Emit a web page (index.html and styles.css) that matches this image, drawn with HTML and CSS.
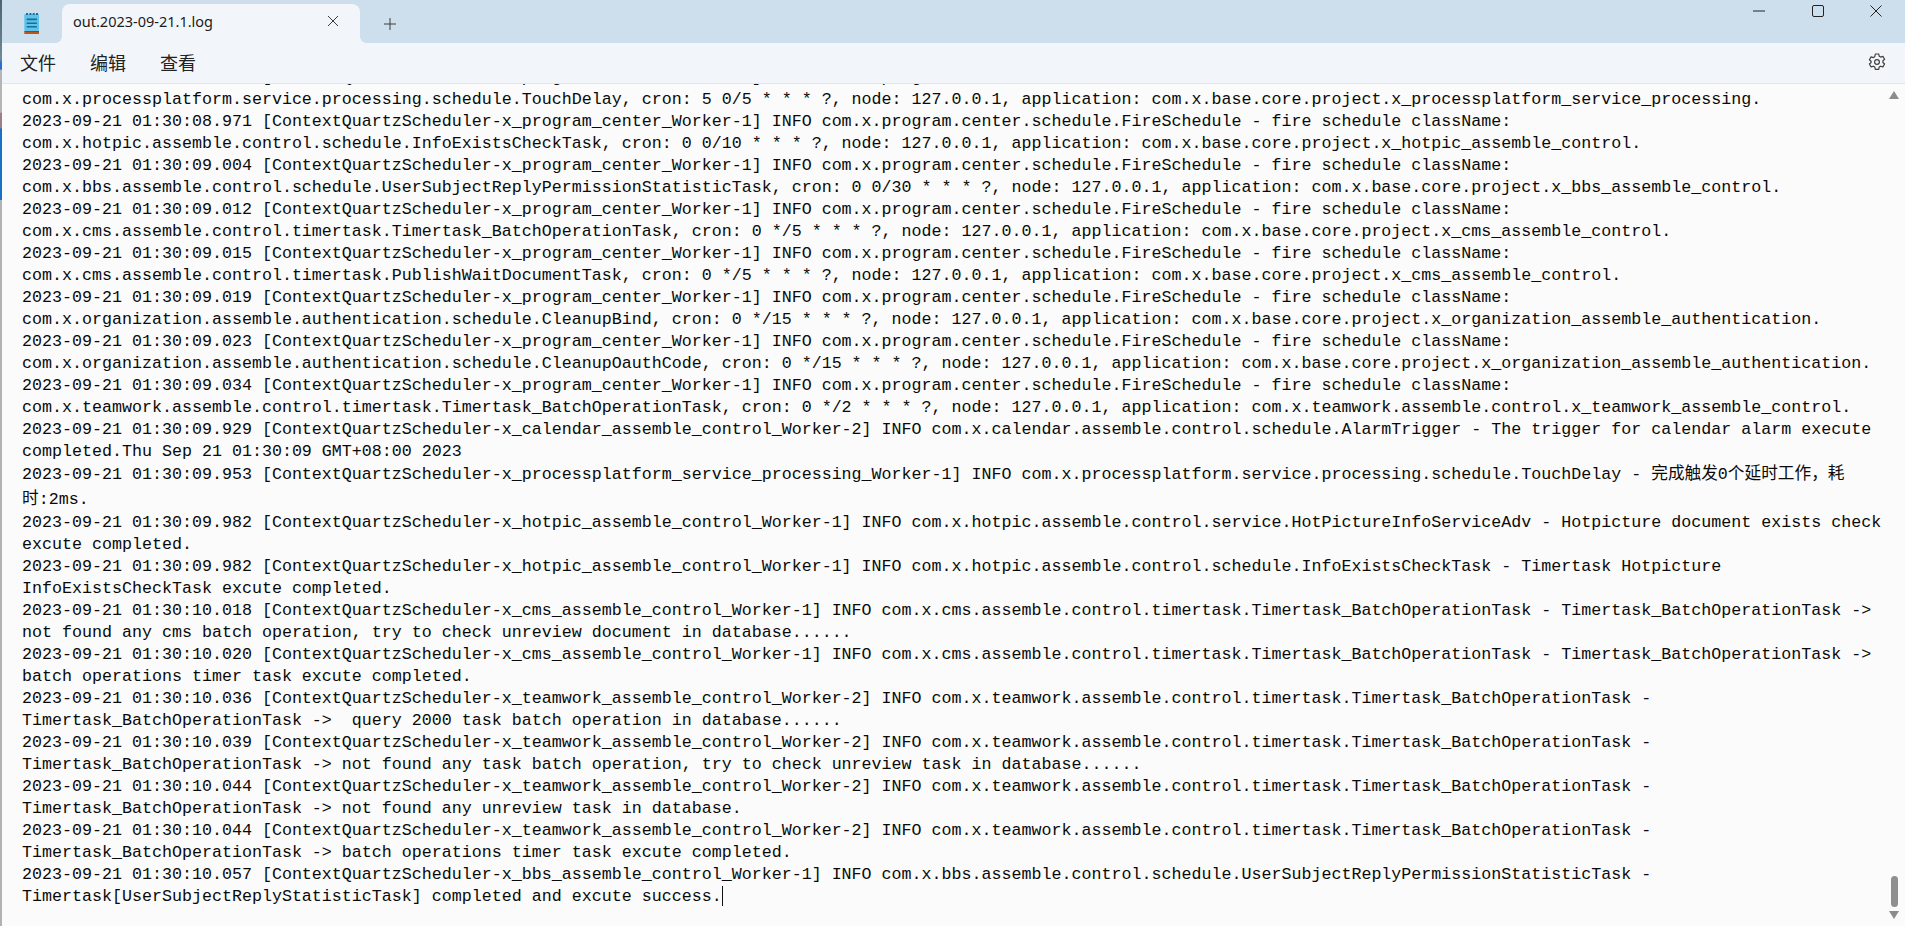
FILE: index.html
```html
<!DOCTYPE html>
<html lang="zh">
<head>
<meta charset="utf-8">
<title>out.2023-09-21.1.log</title>
<link rel="stylesheet" href="styles.css">
</head>
<body>
<div class="window">
  <header class="titlebar">
    <div class="app-icon">
      <svg width="16" height="21" viewBox="0 0 16 21"><rect x="0.3" y="1" width="14.7" height="17" rx="1" fill="#5cc3ea"/><path d="M2 0h2v2H2zM5.4 0h2v2h-2zM8.7 0h2v2h-2zM12 0h2v2h-2z" fill="#1d6f9f"/><path d="M2.7 6.4h10.2M2.7 10.2h10.2M2.7 13.8h10.2" stroke="#1a6c99" stroke-width="1.6"/><rect x="0.3" y="18" width="14.7" height="1" fill="#7d4a24"/><rect x="0.3" y="19" width="14.7" height="2" fill="#b9561a"/></svg>
    </div>
    <div class="tab">
      <span class="tab-title">out.2023-09-21.1.log</span>
      <svg class="tab-close" width="12" height="12" viewBox="0 0 12 12"><path d="M1 1l10 10M11 1L1 11" stroke="#3c3c3c" stroke-width="1"/></svg>
    </div>
    <svg class="new-tab" width="12" height="12" viewBox="0 0 12 12"><path d="M6 0v12M0 6h12" stroke="#3c3c3c" stroke-width="1"/></svg>
    <div class="window-controls">
      <svg width="12" height="12" viewBox="0 0 12 12"><path d="M0 6h12" stroke="#222" stroke-width="1"/></svg>
      <svg width="12" height="12" viewBox="0 0 12 12"><rect x="0.5" y="0.5" width="11" height="11" rx="1.5" fill="none" stroke="#222" stroke-width="1"/></svg>
      <svg width="12" height="12" viewBox="0 0 12 12"><path d="M0.5 0.5l11 11M11.5 0.5l-11 11" stroke="#222" stroke-width="1"/></svg>
    </div>
  </header>
  <nav class="toolbar">
    <span class="menu-item">文件</span>
    <span class="menu-item">编辑</span>
    <span class="menu-item">查看</span>
    <svg class="settings" width="18" height="18" viewBox="0 0 18 18"><path d="M7.3 1h3.4l.5 2.2 1.5.9 2.2-.7 1.7 2.9-1.7 1.5v1.7l1.7 1.5-1.7 2.9-2.2-.7-1.5.9-.5 2.2H7.3l-.5-2.2-1.5-.9-2.2.7-1.7-2.9 1.7-1.5V8.3L1.4 6.8l1.7-2.9 2.2.7 1.5-.9z" fill="none" stroke="#404040" stroke-width="1.2" stroke-linejoin="round"/><circle cx="9" cy="9" r="2.4" fill="none" stroke="#404040" stroke-width="1.2"/></svg>
  </nav>
  <main class="editor">
    <div class="log">
      <div class="line-clipped"><div class="line">2023-09-21 01:30:08.960 [ContextQuartzScheduler-x_program_center_Worker-1] INFO com.x.program.center.schedule.FireSchedule - fire schedule className:</div></div>
      <div class="line">com.x.processplatform.service.processing.schedule.TouchDelay, cron: 5 0/5 * * * ?, node: 127.0.0.1, application: com.x.base.core.project.x_processplatform_service_processing.</div>
      <div class="line">2023-09-21 01:30:08.971 [ContextQuartzScheduler-x_program_center_Worker-1] INFO com.x.program.center.schedule.FireSchedule - fire schedule className:</div>
      <div class="line">com.x.hotpic.assemble.control.schedule.InfoExistsCheckTask, cron: 0 0/10 * * * ?, node: 127.0.0.1, application: com.x.base.core.project.x_hotpic_assemble_control.</div>
      <div class="line">2023-09-21 01:30:09.004 [ContextQuartzScheduler-x_program_center_Worker-1] INFO com.x.program.center.schedule.FireSchedule - fire schedule className:</div>
      <div class="line">com.x.bbs.assemble.control.schedule.UserSubjectReplyPermissionStatisticTask, cron: 0 0/30 * * * ?, node: 127.0.0.1, application: com.x.base.core.project.x_bbs_assemble_control.</div>
      <div class="line">2023-09-21 01:30:09.012 [ContextQuartzScheduler-x_program_center_Worker-1] INFO com.x.program.center.schedule.FireSchedule - fire schedule className:</div>
      <div class="line">com.x.cms.assemble.control.timertask.Timertask_BatchOperationTask, cron: 0 */5 * * * ?, node: 127.0.0.1, application: com.x.base.core.project.x_cms_assemble_control.</div>
      <div class="line">2023-09-21 01:30:09.015 [ContextQuartzScheduler-x_program_center_Worker-1] INFO com.x.program.center.schedule.FireSchedule - fire schedule className:</div>
      <div class="line">com.x.cms.assemble.control.timertask.PublishWaitDocumentTask, cron: 0 */5 * * * ?, node: 127.0.0.1, application: com.x.base.core.project.x_cms_assemble_control.</div>
      <div class="line">2023-09-21 01:30:09.019 [ContextQuartzScheduler-x_program_center_Worker-1] INFO com.x.program.center.schedule.FireSchedule - fire schedule className:</div>
      <div class="line">com.x.organization.assemble.authentication.schedule.CleanupBind, cron: 0 */15 * * * ?, node: 127.0.0.1, application: com.x.base.core.project.x_organization_assemble_authentication.</div>
      <div class="line">2023-09-21 01:30:09.023 [ContextQuartzScheduler-x_program_center_Worker-1] INFO com.x.program.center.schedule.FireSchedule - fire schedule className:</div>
      <div class="line">com.x.organization.assemble.authentication.schedule.CleanupOauthCode, cron: 0 */15 * * * ?, node: 127.0.0.1, application: com.x.base.core.project.x_organization_assemble_authentication.</div>
      <div class="line">2023-09-21 01:30:09.034 [ContextQuartzScheduler-x_program_center_Worker-1] INFO com.x.program.center.schedule.FireSchedule - fire schedule className:</div>
      <div class="line">com.x.teamwork.assemble.control.timertask.Timertask_BatchOperationTask, cron: 0 */2 * * * ?, node: 127.0.0.1, application: com.x.teamwork.assemble.control.x_teamwork_assemble_control.</div>
      <div class="line">2023-09-21 01:30:09.929 [ContextQuartzScheduler-x_calendar_assemble_control_Worker-2] INFO com.x.calendar.assemble.control.schedule.AlarmTrigger - The trigger for calendar alarm execute</div>
      <div class="line">completed.Thu Sep 21 01:30:09 GMT+08:00 2023</div>
      <div class="line line-cjk">2023-09-21 01:30:09.953 [ContextQuartzScheduler-x_processplatform_service_processing_Worker-1] INFO com.x.processplatform.service.processing.schedule.TouchDelay - 完成触发0个延时工作，耗</div>
      <div class="line line-cjk-end">时:2ms.</div>
      <div class="line">2023-09-21 01:30:09.982 [ContextQuartzScheduler-x_hotpic_assemble_control_Worker-1] INFO com.x.hotpic.assemble.control.service.HotPictureInfoServiceAdv - Hotpicture document exists check</div>
      <div class="line">excute completed.</div>
      <div class="line">2023-09-21 01:30:09.982 [ContextQuartzScheduler-x_hotpic_assemble_control_Worker-1] INFO com.x.hotpic.assemble.control.schedule.InfoExistsCheckTask - Timertask Hotpicture</div>
      <div class="line">InfoExistsCheckTask excute completed.</div>
      <div class="line">2023-09-21 01:30:10.018 [ContextQuartzScheduler-x_cms_assemble_control_Worker-1] INFO com.x.cms.assemble.control.timertask.Timertask_BatchOperationTask - Timertask_BatchOperationTask -&gt;</div>
      <div class="line">not found any cms batch operation, try to check unreview document in database......</div>
      <div class="line">2023-09-21 01:30:10.020 [ContextQuartzScheduler-x_cms_assemble_control_Worker-1] INFO com.x.cms.assemble.control.timertask.Timertask_BatchOperationTask - Timertask_BatchOperationTask -&gt;</div>
      <div class="line">batch operations timer task excute completed.</div>
      <div class="line">2023-09-21 01:30:10.036 [ContextQuartzScheduler-x_teamwork_assemble_control_Worker-2] INFO com.x.teamwork.assemble.control.timertask.Timertask_BatchOperationTask -</div>
      <div class="line">Timertask_BatchOperationTask -&gt;  query 2000 task batch operation in database......</div>
      <div class="line">2023-09-21 01:30:10.039 [ContextQuartzScheduler-x_teamwork_assemble_control_Worker-2] INFO com.x.teamwork.assemble.control.timertask.Timertask_BatchOperationTask -</div>
      <div class="line">Timertask_BatchOperationTask -&gt; not found any task batch operation, try to check unreview task in database......</div>
      <div class="line">2023-09-21 01:30:10.044 [ContextQuartzScheduler-x_teamwork_assemble_control_Worker-2] INFO com.x.teamwork.assemble.control.timertask.Timertask_BatchOperationTask -</div>
      <div class="line">Timertask_BatchOperationTask -&gt; not found any unreview task in database.</div>
      <div class="line">2023-09-21 01:30:10.044 [ContextQuartzScheduler-x_teamwork_assemble_control_Worker-2] INFO com.x.teamwork.assemble.control.timertask.Timertask_BatchOperationTask -</div>
      <div class="line">Timertask_BatchOperationTask -&gt; batch operations timer task excute completed.</div>
      <div class="line">2023-09-21 01:30:10.057 [ContextQuartzScheduler-x_bbs_assemble_control_Worker-1] INFO com.x.bbs.assemble.control.schedule.UserSubjectReplyPermissionStatisticTask -</div>
      <div class="line">Timertask[UserSubjectReplyStatisticTask] completed and excute success.<span class="caret"></span></div>
    </div>
    <div class="scrollbar">
      <span class="arrow-up"></span>
      <span class="thumb"></span>
      <span class="arrow-down"></span>
    </div>
  </main>
</div>
</body>
</html>
```
FILE: styles.css
```css
* { box-sizing: border-box; }
html, body { margin: 0; height: 100%; overflow: hidden; }
body { background: #fbfbfb; }
.window {
  height: 926px;
  display: flex;
  flex-direction: column;
  border-left: 2px solid #b0b2b4;
  border-image: linear-gradient(to bottom,
    #4d6470 0, #6d8a96 60px,
    #2a6fd0 64px, #2a6fd0 70px,
    #b5b5b5 71px, #b5b5b5 113px,
    #9a7f8a 114px, #9a7f8a 128px,
    #1a70c4 130px, #1a70c4 200px,
    #b0b2b4 201px, #b0b2b4 100%) 1;
  font-family: "Noto Sans", "Noto Sans CJK SC", sans-serif;
}
.titlebar {
  height: 43px;
  flex: none;
  display: flex;
  align-items: flex-end;
  background: #cddeed;
}
.app-icon { width: 60px; height: 39px; padding: 9px 0 0 22px; }
.tab {
  position: relative;
  width: 298px;
  height: 39px;
  display: flex;
  align-items: center;
  justify-content: space-between;
  padding: 0 21px 6px 11px;
  background: #f2f6fa;
  border-radius: 8px 8px 0 0;
  font-size: 14.5px;
  color: #1c1c1c;
}
.tab::before, .tab::after {
  content: "";
  position: absolute;
  bottom: 0;
  width: 6px;
  height: 6px;
}
.tab::before {
  left: -6px;
  background: radial-gradient(circle at 0 0, transparent 5.5px, #f2f6fa 6px);
}
.tab::after {
  right: -6px;
  background: radial-gradient(circle at 100% 0, transparent 5.5px, #f2f6fa 6px);
}
.new-tab { margin: 0 0 13px 24px; }
.window-controls {
  margin-left: auto;
  height: 43px;
  display: flex;
  gap: 46.5px;
  padding: 5px 23px 0 0;
  align-items: flex-start;
}
.toolbar {
  height: 41px;
  flex: none;
  display: flex;
  align-items: center;
  gap: 34px;
  padding: 0 0 2px 18px;
  background: #f2f6fa;
  border-bottom: 1px solid #e3e5e8;
  font-size: 18px;
  color: #222;
}
.settings { margin-left: auto; margin-right: 19px; }
.editor {
  flex: 1;
  min-height: 0;
  display: flex;
  overflow: hidden;
  background: #fbfbfb;
}
.log {
  flex: 1;
  min-width: 0;
  padding-left: 20px;
  font-family: "Liberation Mono", "Noto Sans CJK SC", monospace;
  font-size: 16.67px;
  color: #0a0a0a;
}
.line-clipped {
  height: 5px;
  overflow: hidden;
  display: flex;
  align-items: flex-end;
}
.line {
  height: 22px;
  line-height: 22px;
  flex: none;
  white-space: pre;
}
.line-cjk { height: 24px; line-height: 24px; }
.line-cjk-end { height: 25px; line-height: 25px; }
.caret {
  display: inline-block;
  width: 1px;
  height: 20px;
  vertical-align: -5px;
  background: #111;
}
.scrollbar {
  width: 22px;
  flex: none;
  display: flex;
  flex-direction: column;
  align-items: center;
  padding: 7px 0 7px;
}
.arrow-up, .arrow-down {
  width: 0;
  height: 0;
  border-left: 5px solid transparent;
  border-right: 5px solid transparent;
}
.arrow-up { border-bottom: 8px solid #8c8c8c; }
.arrow-down { border-top: 8px solid #8c8c8c; margin-top: 4px; }
.thumb {
  width: 7px;
  height: 31px;
  margin-top: auto;
  border-radius: 4px;
  background: #8f8f8f;
}
```
